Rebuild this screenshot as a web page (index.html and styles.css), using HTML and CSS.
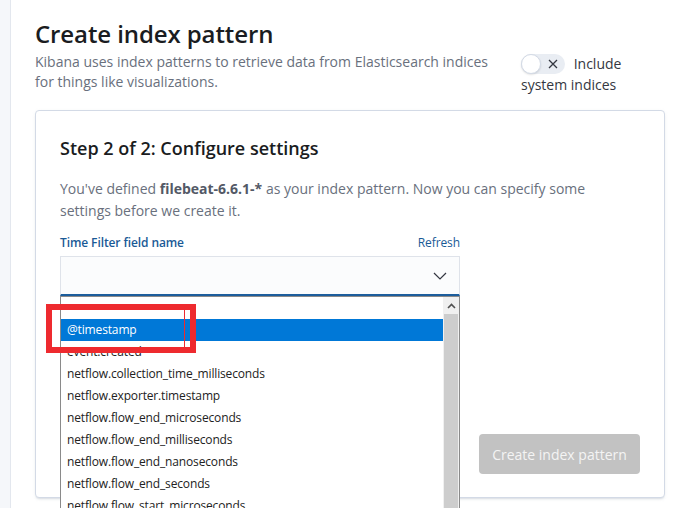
FILE: index.html
```html
<!DOCTYPE html>
<html>
<head>
<meta charset="utf-8">
<link rel="stylesheet" href="styles.css">
</head>
<body>
<div class="app">
  <div class="sidebar"></div>
  <main class="main">
    <header class="header">
      <div class="intro">
        <h1 class="title">Create index pattern</h1>
        <p class="subtitle">Kibana uses index patterns to retrieve data from Elasticsearch indices for things like visualizations.</p>
      </div>
      <div class="toggle-wrap">
        <span class="toggle"><span class="knob"></span><svg class="toggle-x" width="12" height="12" viewBox="0 0 12 12"><path d="M2 2 L10 10 M10 2 L2 10" stroke="#343741" stroke-width="1.3" fill="none"/></svg></span>
        <span class="toggle-label">Include system indices</span>
      </div>
    </header>
    <section class="panel">
      <h2 class="step">Step 2 of 2: Configure settings</h2>
      <p class="desc">You've defined <b>filebeat-6.6.1-*</b> as your index pattern. Now you can specify some settings before we create it.</p>
      <div class="field">
        <div class="field-head">
          <label class="label">Time Filter field name</label>
          <a class="refresh">Refresh</a>
        </div>
        <div class="select">
          <svg class="chevron" width="14" height="8" viewBox="0 0 14 8"><path d="M1 1 L7 7 L13 1" stroke="#343741" stroke-width="1.2" fill="none"/></svg>
        </div>
        <div class="dropdown">
          <ul class="options">
            <li class="opt"></li>
            <li class="opt selected">@timestamp</li>
            <li class="opt">event.created</li>
            <li class="opt">netflow.collection_time_milliseconds</li>
            <li class="opt">netflow.exporter.timestamp</li>
            <li class="opt">netflow.flow_end_microseconds</li>
            <li class="opt">netflow.flow_end_milliseconds</li>
            <li class="opt">netflow.flow_end_nanoseconds</li>
            <li class="opt">netflow.flow_end_seconds</li>
            <li class="opt">netflow.flow_start_microseconds</li>
          </ul>
          <div class="scrollbar">
            <div class="scroll-up"><svg width="9" height="6" viewBox="0 0 9 6"><path d="M1 5 L4.5 1.5 L8 5" stroke="#505050" stroke-width="1.6" fill="none"/></svg></div>
            <div class="scroll-track"></div>
          </div>
        </div>
        <div class="annotation"><span class="annotation-line"></span></div>
      </div>
      <div class="actions">
        <button class="btn" disabled>Create index pattern</button>
      </div>
    </section>
  </main>
</div>
</body>
</html>
```

FILE: styles.css
```css
* { box-sizing: border-box; }
html, body { margin: 0; padding: 0; background: #fff; overflow: hidden; height: 508px; }
body { font-family: "Open Sans", "Noto Sans", sans-serif; color: #343741; }

.app { display: flex; height: 508px; overflow: hidden; }
.sidebar { width: 11px; background: #f5f7fa; border-right: 1px solid #e3e7ee; flex: none; }
.main { flex: 1; padding: 18px 21px 0 24px; }

.header { display: flex; }
.intro { width: 460px; }
.title { margin: 0; font-size: 24px; font-weight: 600; line-height: 32px; color: #1a1c21; letter-spacing: -0.1px; }
.subtitle { margin: 2px 0 0; font-size: 14px; line-height: 20px; color: #69707d; }

.toggle-wrap { width: 120px; margin-left: 26px; margin-top: 35px; font-size: 14px; line-height: 21px; color: #343741; }
.toggle { display: inline-flex; align-items: center; width: 44px; height: 20px; border-radius: 10px; background: #e9edf3; vertical-align: -5px; margin-right: 5px; }
.knob { width: 20px; height: 20px; border-radius: 50%; background: #fff; border: 1px solid #d3dae6; box-shadow: 0 1px 2px rgba(0,0,0,0.12); }
.toggle-x { margin-left: 6px; }

.panel { margin-top: 15px; width: 630px; height: 388px; border: 1px solid #d3dae6; border-radius: 4px; background: #fff; box-shadow: 0 2px 2px -1px rgba(152,162,179,0.3), 0 1px 5px -2px rgba(152,162,179,0.3); padding: 25px 24px 23px 24px; display: flex; flex-direction: column; }
.step { margin: 0; font-size: 18px; font-weight: 600; line-height: 24px; color: #1a1c21; }
.desc { margin: 18px 0 0; font-size: 14px; line-height: 22px; color: #69707d; width: 560px; }
.desc b { font-weight: 700; color: #535966; }

.field { width: 400px; margin-top: 12px; position: relative; }
.field-head { display: flex; justify-content: space-between; align-items: baseline; font-size: 12px; line-height: 18px; }
.label { font-weight: 600; color: #1a5a96; letter-spacing: -0.1px; }
.refresh { color: #1a5a96; letter-spacing: -0.1px; }
.select { margin-top: 4px; height: 40px; background: #fbfcfd; border: 1px solid #dfe3ea; border-bottom: 2px solid #1c5d9c; display: flex; align-items: center; justify-content: flex-end; padding-right: 12px; }

.dropdown { position: absolute; left: 0; top: 62px; width: 400px; height: 260px; background: #fff; border: 1px solid #8a8a8a; display: flex; z-index: 2; }
.options { list-style: none; margin: 0; padding: 0; flex: 1; font-size: 12px; color: #222; letter-spacing: -0.15px; }
.opt { height: 22px; line-height: 22px; padding-left: 6px; white-space: nowrap; }
.opt.selected { background: #0078d7; color: #fff; }
.scrollbar { width: 16px; flex: none; display: flex; flex-direction: column; background: #f0f0f0; }
.scroll-up { height: 17px; display: flex; align-items: center; justify-content: center; }
.scroll-track { flex: 1; background: #cdcdcd; margin: 0 1px; }

.annotation { position: absolute; left: -14px; top: 70px; width: 150px; height: 49px; border: 6px solid #ee2a2f; z-index: 3; }
.annotation-line { position: absolute; left: 132px; top: 0; width: 1px; height: 100%; background: #ee2a2f; }

.actions { margin-top: auto; display: flex; justify-content: flex-end; }
.btn { width: 161px; height: 40px; border: none; border-radius: 4px; background: #c2c2c2; color: #f4f4f4; font-family: "Open Sans", "Noto Sans", sans-serif; font-size: 14px; padding: 0; }
```
